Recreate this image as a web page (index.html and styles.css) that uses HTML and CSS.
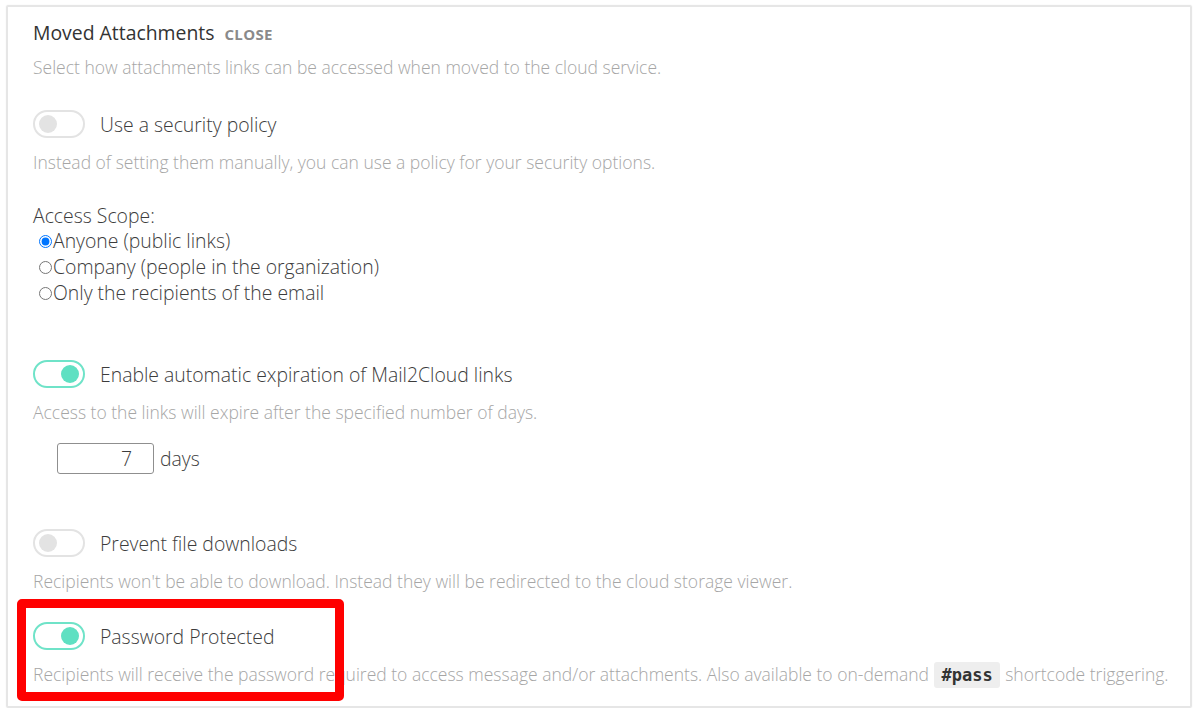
FILE: index.html
```html
<!DOCTYPE html>
<html>
<head>
<meta charset="utf-8">
<link rel="stylesheet" href="styles.css">
</head>
<body>
<div class="panel">
  <div class="title-row">
    <span class="title">Moved Attachments</span>
    <span class="close">CLOSE</span>
  </div>
  <p class="desc d-first">Select how attachments links can be accessed when moved to the cloud service.</p>

  <div class="toggle-row r-policy">
    <span class="toggle"><span class="knob"></span></span>
    <span class="label">Use a security policy</span>
  </div>
  <p class="desc">Instead of setting them manually, you can use a policy for your security options.</p>

  <div class="scope">
    <div class="scope-title">Access Scope:</div>
    <label class="radio"><input type="radio" name="scope" checked>Anyone (public links)</label>
    <label class="radio"><input type="radio" name="scope">Company (people in the organization)</label>
    <label class="radio"><input type="radio" name="scope">Only the recipients of the email</label>
  </div>

  <div class="toggle-row r-expire">
    <span class="toggle on"><span class="knob"></span></span>
    <span class="label">Enable automatic expiration of Mail2Cloud links</span>
  </div>
  <p class="desc">Access to the links will expire after the specified number of days.</p>

  <div class="days-row">
    <input class="days-input" type="text" value="7">
    <span class="days">days</span>
  </div>

  <div class="toggle-row r-download">
    <span class="toggle"><span class="knob"></span></span>
    <span class="label">Prevent file downloads</span>
  </div>
  <p class="desc">Recipients won't be able to download. Instead they will be redirected to the cloud storage viewer.</p>

  <div class="pw-block">
    <div class="toggle-row r-password">
      <span class="toggle on"><span class="knob"></span></span>
      <span class="label">Password Protected</span>
    </div>
    <p class="desc">Recipients will receive the password required to access message and/or attachments. Also available to on-demand <code class="code">#pass</code> shortcode triggering.</p>
    <div class="highlight"></div>
  </div>
</div>
</body>
</html>
```

FILE: styles.css
```css
html, body {
  margin: 0;
  padding: 0;
  background: #ffffff;
}
body {
  font-family: "Open Sans", "Noto Sans", sans-serif;
  font-weight: 300;
  color: #444444;
}
.panel {
  margin: 5px 6px 0 6px;
  width: 1186px;
  height: 703px;
  box-sizing: border-box;
  border: 2px solid #e6e6e6;
  border-radius: 2px;
  padding: 13px 0 0 25px;
  box-shadow: 0 0 2px rgba(0,0,0,0.06);
}
.title-row {
  display: flex;
  align-items: baseline;
  gap: 10px;
  line-height: 26px;
}
.title {
  font-size: 19.4px;
  font-weight: 400;
  color: #333333;
}
.close {
  font-size: 15px;
  font-weight: 700;
  color: #8a8a8a;
  letter-spacing: 0.3px;
}
.desc {
  margin: 13px 0 0 0;
  font-size: 17.5px;
  line-height: 22px;
  color: #a6a6a6;
}
.d-first {
  margin-top: 9px;
}
.toggle-row {
  display: flex;
  align-items: center;
  gap: 15px;
  height: 28px;
}
.r-policy { margin-top: 32px; }
.r-expire { margin-top: 54px; }
.r-download { margin-top: 55px; }
.r-password { margin-top: 0; }
.toggle {
  box-sizing: border-box;
  width: 52px;
  height: 28px;
  border: 2px solid #e3e3e3;
  border-radius: 14px;
  background: #ffffff;
  display: flex;
  align-items: center;
  padding: 0 4px;
}
.knob {
  width: 18px;
  height: 18px;
  border-radius: 50%;
  background: #e3e3e3;
}
.toggle.on {
  border-color: #6fe3c8;
  justify-content: flex-end;
}
.toggle.on .knob {
  background: #5fe0c2;
}
.label {
  font-size: 19.4px;
  color: #3c3c3c;
}
.scope {
  margin-top: 30px;
  font-size: 19.4px;
  line-height: 26px;
  color: #3c3c3c;
}
.scope-title {
  margin-bottom: -1px;
}
.radio {
  display: flex;
  align-items: center;
}
.radio input {
  margin: 0 1px 0 6px;
  width: 13px;
  height: 13px;
}
.days-row {
  margin: 20px 0 0 24px;
  display: flex;
  align-items: center;
  gap: 6px;
}
.days-input {
  box-sizing: border-box;
  width: 97px;
  height: 31px;
  border: 1px solid #8f8f8f;
  border-radius: 3px;
  font-family: "Open Sans", "Noto Sans", sans-serif;
  font-weight: 300;
  font-size: 19.4px;
  color: #3c3c3c;
  text-align: right;
  padding: 0 21px 0 4px;
  outline: none;
}
.days {
  font-size: 19.4px;
  color: #3c3c3c;
}
.pw-block {
  position: relative;
  margin-top: 30px;
}
.code {
  font-family: "DejaVu Sans Mono", "Liberation Mono", monospace;
  font-size: 17px;
  font-weight: 700;
  color: #333333;
  background: #eeeeee;
  border-radius: 3px;
  padding: 3px 7px;
  margin: 0 1px;
}
.highlight {
  position: absolute;
  left: -16px;
  top: -23px;
  width: 327px;
  height: 102px;
  box-sizing: border-box;
  border: 9px solid #ff0000;
  border-radius: 5px;
  pointer-events: none;
}
```
